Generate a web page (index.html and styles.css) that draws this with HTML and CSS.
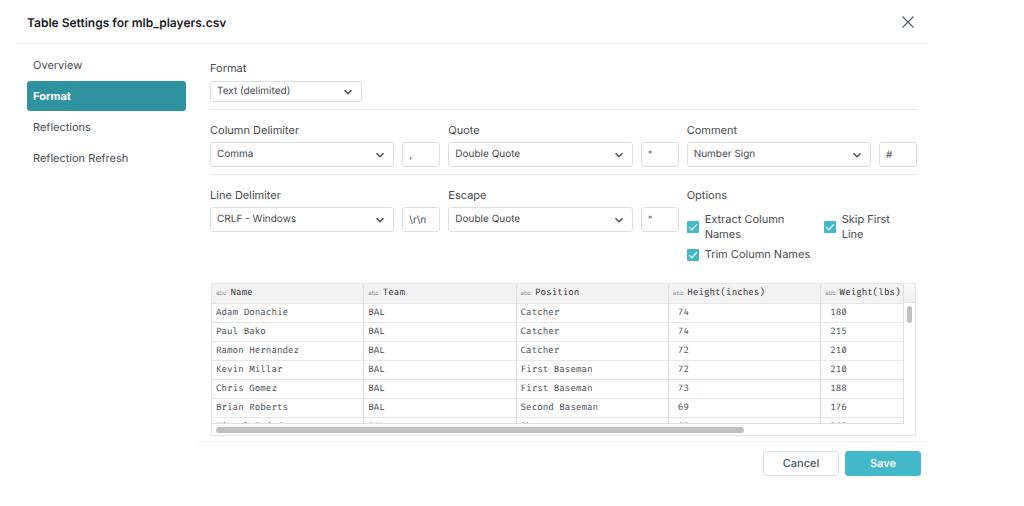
FILE: index.html
```html
<!DOCTYPE html>
<html lang="en">
<head>
<meta charset="utf-8">
<title>Table Settings</title>
<link rel="stylesheet" href="styles.css">
</head>
<body>
<svg class="defs" aria-hidden="true">
  <symbol id="chevron" viewBox="0 0 8 8"><path d="M1.2 2.6 4 5.4 6.8 2.6" fill="none" stroke="currentColor" stroke-width="1.1"/></symbol>
</svg>
<main class="dialog">
  <header class="dialog-header">
    <h1 class="title">Table Settings for mlb_players.csv</h1>
    <button class="close" type="button" aria-label="Close"><svg viewBox="0 0 12 12" width="12" height="12"><path d="M.5.5l11 11M11.5.5l-11 11" fill="none" stroke="#505862" stroke-width="1.1"/></svg></button>
  </header>
  <div class="dialog-body">
    <nav class="tabs">
      <a class="tab" href="#overview">Overview</a>
      <a class="tab tab-active" href="#format" aria-current="page">Format</a>
      <a class="tab" href="#reflections">Reflections</a>
      <a class="tab" href="#refresh">Reflection Refresh</a>
    </nav>
    <form class="panel">
      <div class="content">
        <section class="section">
          <div class="field">
            <label class="label" for="format">Format</label>
            <div class="picker picker-small"><select class="select" id="format"><option>Text (delimited)</option></select><svg class="chevron"><use href="#chevron"/></svg></div>
          </div>
        </section>
        <section class="section section-row">
          <div class="field">
            <label class="label" for="column">Column Delimiter</label>
            <div class="controls"><div class="picker"><select class="select" id="column"><option>Comma</option></select><svg class="chevron"><use href="#chevron"/></svg></div><input class="char" type="text" value="," aria-label="Column delimiter character"></div>
          </div>
          <div class="field">
            <label class="label" for="quote">Quote</label>
            <div class="controls"><div class="picker"><select class="select" id="quote"><option>Double Quote</option></select><svg class="chevron"><use href="#chevron"/></svg></div><input class="char" type="text" value="&quot;" aria-label="Quote character"></div>
          </div>
          <div class="field">
            <label class="label" for="comment">Comment</label>
            <div class="controls"><div class="picker"><select class="select" id="comment"><option>Number Sign</option></select><svg class="chevron"><use href="#chevron"/></svg></div><input class="char" type="text" value="#" aria-label="Comment character"></div>
          </div>
        </section>
        <section class="section section-row section-last">
          <div class="field">
            <label class="label" for="line">Line Delimiter</label>
            <div class="controls"><div class="picker"><select class="select" id="line"><option>CRLF - Windows</option></select><svg class="chevron"><use href="#chevron"/></svg></div><input class="char" type="text" value="\r\n" aria-label="Line delimiter characters"></div>
          </div>
          <div class="field">
            <label class="label" for="escape">Escape</label>
            <div class="controls"><div class="picker"><select class="select" id="escape"><option>Double Quote</option></select><svg class="chevron"><use href="#chevron"/></svg></div><input class="char" type="text" value="&quot;" aria-label="Escape character"></div>
          </div>
          <fieldset class="field options">
            <legend class="label">Options</legend>
            <div class="option-grid">
              <label class="option"><span class="check"><input type="checkbox" checked><svg viewBox="0 0 12 12"><path d="M2.2 6.2 4.8 8.8 9.8 3.4" fill="none" stroke="#fff" stroke-width="1.2"/></svg></span><span>Extract Column Names</span></label>
              <label class="option"><span class="check"><input type="checkbox" checked><svg viewBox="0 0 12 12"><path d="M2.2 6.2 4.8 8.8 9.8 3.4" fill="none" stroke="#fff" stroke-width="1.2"/></svg></span><span>Skip First Line</span></label>
              <label class="option option-wide"><span class="check"><input type="checkbox" checked><svg viewBox="0 0 12 12"><path d="M2.2 6.2 4.8 8.8 9.8 3.4" fill="none" stroke="#fff" stroke-width="1.2"/></svg></span><span>Trim Column Names</span></label>
            </div>
          </fieldset>
        </section>
        <div class="preview">
          <div class="viewport">
            <table class="data">
              <thead><tr><th><span class="type">abc</span>Name</th><th><span class="type">abc</span>Team</th><th><span class="type">abc</span>Position</th><th><span class="type">abc</span>Height(inches)</th><th><span class="type">abc</span>Weight(lbs)</th></tr></thead>
              <tbody>
                <tr><td>Adam Donachie</td><td>BAL</td><td>Catcher</td><td class="num">74</td><td class="num">180</td></tr>
                <tr><td>Paul Bako</td><td>BAL</td><td>Catcher</td><td class="num">74</td><td class="num">215</td></tr>
                <tr><td>Ramon Hernandez</td><td>BAL</td><td>Catcher</td><td class="num">72</td><td class="num">210</td></tr>
                <tr><td>Kevin Millar</td><td>BAL</td><td>First Baseman</td><td class="num">72</td><td class="num">210</td></tr>
                <tr><td>Chris Gomez</td><td>BAL</td><td>First Baseman</td><td class="num">73</td><td class="num">188</td></tr>
                <tr><td>Brian Roberts</td><td>BAL</td><td>Second Baseman</td><td class="num">69</td><td class="num">176</td></tr>
                <tr><td>Miguel Tejada</td><td>BAL</td><td>Shortstop</td><td class="num">69</td><td class="num">209</td></tr>
              </tbody>
            </table>
          </div>
          <div class="vtrack"><div class="vhead"></div><div class="vthumb"></div></div>
          <div class="htrack"><div class="hthumb"></div></div>
        </div>
      </div>
      <footer class="actions">
        <button class="btn" type="button">Cancel</button>
        <button class="btn btn-primary" type="submit">Save</button>
      </footer>
    </form>
  </div>
</main>
</body>
</html>
```
FILE: styles.css
```css
* { box-sizing: border-box; }
body {
  margin: 0;
  background: #fff;
  color: #484c50;
  font: 11px/15px Inter, "Liberation Sans", sans-serif;
  text-rendering: geometricPrecision;
}
.defs { position: absolute; width: 0; height: 0; }
.dialog { margin: 0 96px 0 16px; }
.dialog-header {
  display: flex;
  align-items: center;
  justify-content: space-between;
  height: 44px;
  padding: 1px 14px 0 11px;
  border-bottom: 1px solid #f0f1f2;
}
.title { margin: 0; color: #1b1d1f; font-size: 12px; font-weight: 600; }
.close { display: flex; padding: 0; border: 0; background: none; }
.dialog-body { display: flex; }
.tabs {
  display: flex;
  flex: none;
  flex-direction: column;
  gap: 1px;
  width: 170px;
  padding: 6px 0 0 11px;
}
.tab {
  display: flex;
  align-items: center;
  height: 30px;
  padding: 0 6px;
  border-radius: 3px;
  color: inherit;
  text-decoration: none;
}
.tab-active { background: #2f92a1; color: #fff; font-weight: 700; }
.panel { flex: 1; min-width: 0; margin-left: 12px; }
.content { padding: 17px 11px 5px 12px; }
.section {
  padding-bottom: 7px;
  margin-bottom: 13px;
  border-bottom: 1px solid #e3e5e7;
}
.section-row { display: grid; grid-template-columns: repeat(3, 1fr); gap: 8px; }
.section-last { border: 0; padding: 0; margin-bottom: 21px; }
.field { min-width: 0; margin: 0; padding: 0; border: 0; }
.label { display: block; padding: 0; margin-bottom: 5px; }
.section-row .label { margin-bottom: 4px; }
.controls { display: flex; gap: 8px; }
.picker { position: relative; flex: 1; min-width: 0; height: 25px; }
.picker-small { width: 152px; height: 21px; }
.select, .char {
  width: 100%;
  height: 100%;
  padding: 0 6px;
  border: 1px solid #dcdfe2;
  border-radius: 3px;
  background: #fff;
  color: inherit;
  font: 10px/15px Inter, "Liberation Sans", sans-serif;
  text-rendering: inherit;
  appearance: none;
}
.char { flex: none; width: 38px; height: 25px; }
.chevron {
  position: absolute;
  top: 50%;
  right: 9px;
  width: 10px;
  height: 10px;
  margin-top: -5px;
  pointer-events: none;
}
.option-grid { display: grid; grid-template-columns: 137px 1fr; row-gap: 5px; padding-top: 5px; }
.option { display: flex; align-items: center; gap: 6px; padding-right: 20px; }
.option-wide { grid-column: span 2; }
.check { position: relative; flex: none; width: 12px; height: 12px; }
.check input {
  display: block;
  width: 12px;
  height: 12px;
  margin: 0;
  border-radius: 1px;
  background: #43b8c9;
  appearance: none;
}
.check svg { position: absolute; inset: 0; pointer-events: none; }
.preview {
  display: grid;
  grid-template-columns: 1fr 12px;
  margin: 0 1px;
  border: 1px solid #e6e6e6;
}
.viewport { height: 140px; overflow: hidden; border-bottom: 1px solid #dedede; }
.data {
  width: 110.2%;
  table-layout: fixed;
  border-collapse: separate;
  border-spacing: 0;
  font: 9px/18px "Fira Code", "Noto Sans Mono", "DejaVu Sans Mono", monospace;
}
.data th, .data td {
  height: 19px;
  padding: 0 4px;
  border-right: 1px solid #dedede;
  border-bottom: 1px solid #e6e6e6;
  text-align: left;
  font-weight: 400;
  white-space: nowrap;
}
.data th { background: #f2f2f2; color: #333; }
.data .num { padding-left: 9px; }
.type { margin-right: 4px; color: #8b9096; font: 6px/18px Inter, sans-serif; }
.vtrack { border-left: 1px solid #dedede; }
.vhead { height: 19px; background: linear-gradient(#fafafa, #eee); border-bottom: 1px solid #e6e6e6; }
.vthumb { width: 5px; height: 17px; margin: 3px 0 0 3px; border-radius: 3px; background: #c1c1c1; }
.htrack { grid-column: span 2; height: 11px; padding: 3px 4px; }
.hthumb { width: 76%; height: 6px; border-radius: 3px; background: #c1c1c1; }
.actions {
  display: flex;
  justify-content: flex-end;
  gap: 6px;
  padding: 9px 7px;
  border-top: 1px solid #f0f1f2;
}
.btn {
  width: 76px;
  height: 25px;
  padding: 0;
  border: 1px solid #dcdfe2;
  border-radius: 3px;
  background: #fff;
  color: #505862;
  font: 500 11px/15px Inter, "Liberation Sans", sans-serif;
  text-rendering: inherit;
}
.btn-primary { border-color: #43b8c9; background: #43b8c9; color: #fff; font-weight: 600; }
```
